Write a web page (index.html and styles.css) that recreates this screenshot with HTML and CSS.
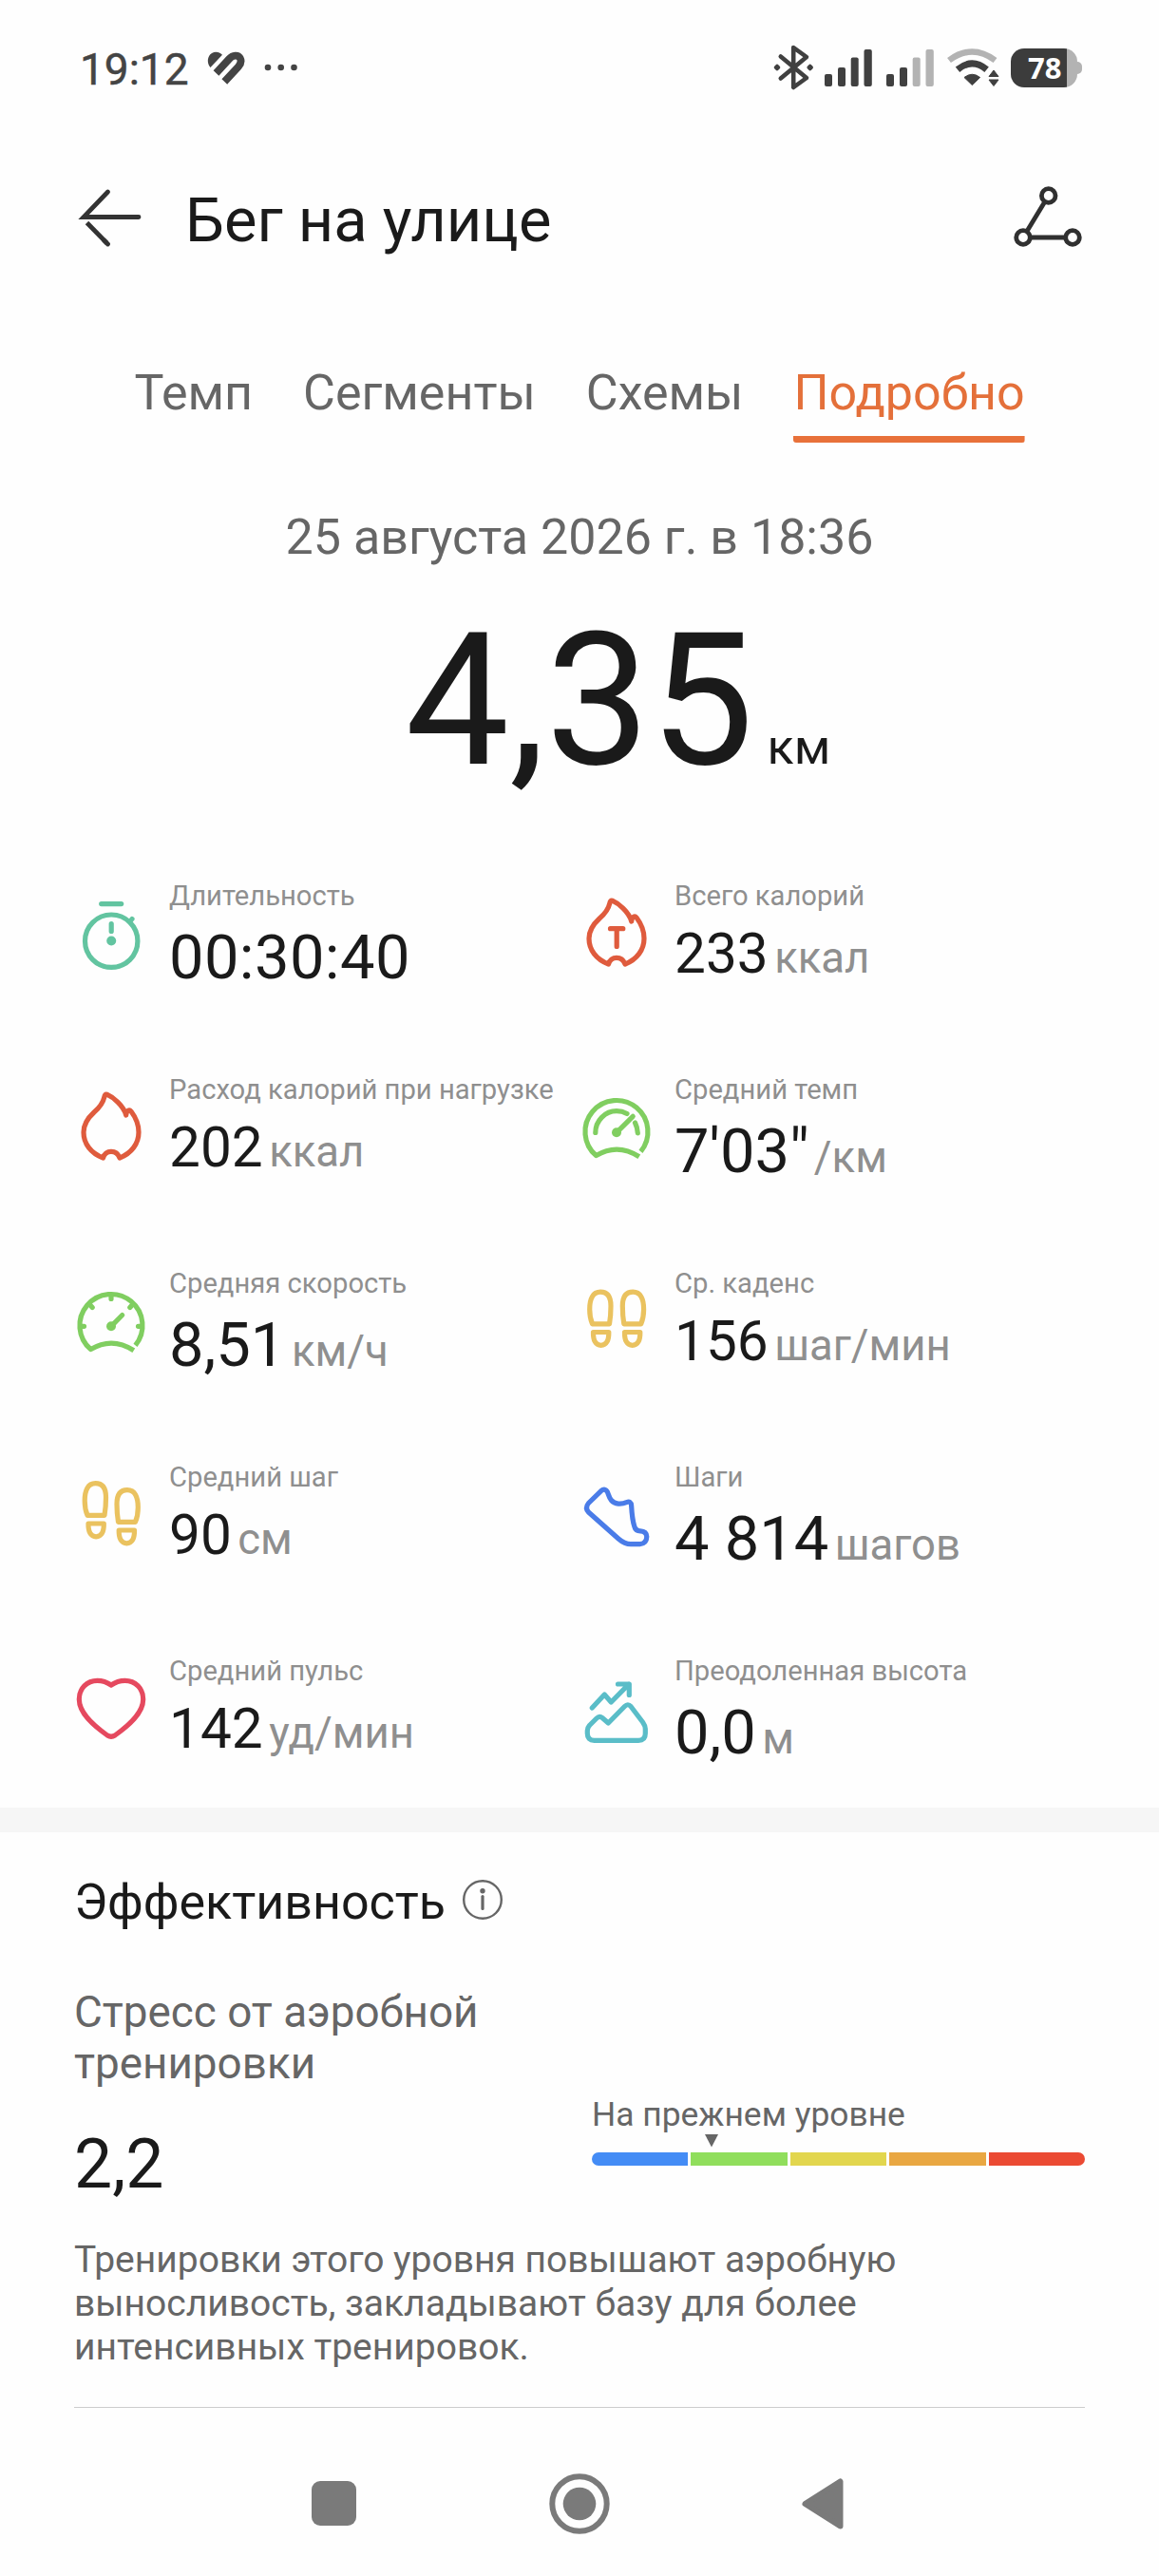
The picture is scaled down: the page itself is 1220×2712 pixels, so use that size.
FILE: index.html
```html
<!DOCTYPE html>
<html lang="ru">
<head>
<meta charset="utf-8">
<title>Бег на улице</title>
<link rel="stylesheet" href="styles.css">
</head>
<body>
<svg class="defs" aria-hidden="true">
  <symbol id="flame" viewBox="0 0 72 72" overflow="visible">
    <path d="M31.5 1.2C38 4 49 13 51.7 23C52 18.5 55 16.5 57 19C61.5 25 65 32 65 41C65 53 57.5 63 45 68C43.5 64 40 61.3 36 61.3C32 61.3 28.5 64 27.5 68C14.5 63 7 53 7 41C7 32 12 25.500 18 20C25 14 27.500 10 28.800 4Q29.500 .5 31.500 1.200Z"/>
  </symbol>
  <symbol id="foot" viewBox="0 0 34 66" overflow="visible">
    <path d="M10.500 38.800C8.500 34 7.700 29 7.700 23.500C7.700 12.500 11 5.200 19 5.200C27 5.200 30 11.500 30 20C30 27 29.500 33 28.500 38.800Z"/>
    <path d="M11.500 47.500H27.800C28 56 25.500 61.300 19.600 61.300C13.800 61.300 11.300 56 11.500 47.500Z"/>
  </symbol>
  <symbol id="gauge" viewBox="0 0 72 72" overflow="visible">
    <path stroke-linecap="butt" d="M61.500 58.400A33 33 0 1 0 14.500 62.600Q37 49 59.800 63.800"/>
    <circle cx="36" cy="38.300" r="5" fill="currentColor" stroke="none"/>
  </symbol>
</svg>

<header class="status">
  <span class="time">19:12</span>
  <svg class="health" width="40" height="34" viewBox="0 0 40 34" fill="none" stroke="#444">
    <path fill="#444" stroke="none" d="M3.500 17C-.5 12.500 0 5 5 2C8.500-.2 13 .5 16 3.700Z"/>
    <path stroke-width="7.800" d="M9.500 23L23.300 8C27 4 32.500 3.500 34.700 7.200C36.500 10.500 35.300 13.500 32.800 16.300L18.300 32"/>
  </svg>
  <svg class="more" width="36" height="8" fill="#444"><circle cx="4" cy="4" r="3.300"/><circle cx="17.700" cy="4" r="3.300"/><circle cx="31.500" cy="4" r="3.300"/></svg>
  <div class="indicators">
    <svg class="bt" width="43" height="48" viewBox="0 0 43 48" fill="none" stroke="#404040" stroke-width="4.600" stroke-linecap="round" stroke-linejoin="round">
      <path d="M7.800 12.500L35 35L21.200 45V3L35 13L7.800 35.500"/>
      <path d="M4 22.500L2.500 24L4 25.500L5.500 24ZM38.700 22.500L37.200 24L38.700 25.500L40.200 24Z" stroke-width="3.600"/>
    </svg>
    <svg class="bars" width="50" height="39" fill="#404040"><rect y="26" width="8" height="13" rx="2"/><rect x="14" y="19" width="8" height="20" rx="2"/><rect x="27.700" y="8.500" width="8" height="30.500" rx="2"/><rect x="41.500" width="8.300" height="39" rx="2"/></svg>
    <svg class="bars second" width="50" height="39" fill="#404040"><rect y="26" width="8" height="13" rx="2"/><rect x="14" y="19" width="8" height="20" rx="2"/><g fill="#b3b3b3"><rect x="27.700" y="8.500" width="8" height="30.500" rx="2"/><rect x="41.500" width="8.300" height="39" rx="2"/></g></svg>
    <svg class="wifi" width="55" height="40" viewBox="0 0 55 40" fill="none">
      <path d="M2 12.500Q26.300-5.500 50.500 12.500" stroke="#b3b3b3" stroke-width="6.500"/>
      <path d="M11 22.200Q26.300 9.500 41.600 22.200" stroke="#404040" stroke-width="7"/>
      <path d="M18 30.500Q26.300 24 34.600 30.500L26.300 38.500Z" fill="#404040" stroke="#404040" stroke-width="1" stroke-linejoin="round"/>
      <path d="M44 29.500L49 23L54 29.500ZM44 33L49 39.500L54 33Z" fill="#404040" stroke="#404040" stroke-linejoin="round"/>
    </svg>
    <div class="battery"><span class="level">78</span></div>
  </div>
</header>

<nav class="appbar">
  <svg width="66" height="60" viewBox="0 0 66 60" fill="none" stroke="#333" stroke-width="4.800" stroke-linecap="round"><path d="M29.500 3L4 29.500H62"/><path stroke-linecap="butt" d="M7.500 35.500L28.500 57"/><path d="M25.500 54L29.500 58"/></svg>
  <h1>Бег на улице</h1>
  <svg class="route" width="72" height="66" viewBox="0 0 72 66" fill="none" stroke="#303030" stroke-width="4.800"><circle cx="36.700" cy="10" r="7.300"/><circle cx="10" cy="54" r="7.300"/><circle cx="62" cy="54" r="7.300"/><path d="M32.900 16.300L13.800 47.700M17.300 54H54.700"/></svg>
</nav>

<div class="tabs">
  <a>Темп</a><a>Сегменты</a><a>Схемы</a><a class="active">Подробно</a>
</div>

<section class="summary">
  <p class="date">25 августа 2026 г. в 18:36</p>
  <p class="distance"><span class="km">4,35</span><span class="km-unit">км</span></p>
</section>

<section class="metrics">
  <div class="metric">
    <svg class="icon mint" viewBox="0 0 72 72"><circle cx="36.200" cy="40.700" r="27.700"/><path d="M25.700 1.600H46.700M36.200 22.500V30.500M56 20L58 17.500"/><circle cx="36.200" cy="40.500" r="5" fill="currentColor" stroke="none"/></svg>
    <div><p class="label">Длительность</p><p class="value big clock">00:30:40</p></div>
  </div>
  <div class="metric">
    <svg class="icon red" viewBox="0 0 72 72"><use href="#flame" width="72" height="72"/><path d="M29.500 30.700H42.800M36.200 30.700V49.500"/></svg>
    <div><p class="label">Всего калорий</p><p class="value">233<span class="unit">ккал</span></p></div>
  </div>
  <div class="metric">
    <svg class="icon red" viewBox="0 0 72 72"><use href="#flame" width="72" height="72"/></svg>
    <div><p class="label">Расход калорий при нагрузке</p><p class="value">202<span class="unit">ккал</span></p></div>
  </div>
  <div class="metric">
    <svg class="icon green" viewBox="0 0 72 72"><use href="#gauge" width="72" height="72"/><path d="M36 38.300L53.200 21.300"/><path d="M13.800 38.500C13.800 26 24 15.700 36 15.700Q42 15.700 47 18.500"/><path d="M55.500 28Q58 33 58.300 38.800"/></svg>
    <div><p class="label">Средний темп</p><p class="value big">7'03"<span class="unit tight">/км</span></p></div>
  </div>
  <div class="metric">
    <svg class="icon green" viewBox="0 0 72 72"><use href="#gauge" width="72" height="72"/><path d="M36 38.300L47.700 26.500M36 6V9.500M4.500 38.300H7.500M64.500 38.300H67.500M14 16L16.200 18.500M58 16L55.800 18.500"/></svg>
    <div><p class="label">Средняя скорость</p><p class="value big">8,51<span class="unit">км/ч</span></p></div>
  </div>
  <div class="metric">
    <svg class="icon yellow" viewBox="0 0 72 72"><use href="#foot" width="34" height="66"/><use href="#foot" width="34" height="66" transform="matrix(-1 0 0 1 72.300 0)"/></svg>
    <div><p class="label">Ср. каденс</p><p class="value">156<span class="unit">шаг/мин</span></p></div>
  </div>
  <div class="metric">
    <svg class="icon yellow" viewBox="0 0 72 72"><use href="#foot" y="-2.500" x=".5" width="34" height="66"/><use href="#foot" width="34" height="66" transform="matrix(-1 0 0 1 72 4.500)"/></svg>
    <div><p class="label">Средний шаг</p><p class="value">90<span class="unit">см</span></p></div>
  </div>
  <div class="metric">
    <svg class="icon blue" viewBox="0 0 72 72"><path d="M19.500 7.800L6.500 20.500Q2.500 25.500 6.500 30L38 58Q44.500 63.700 51 63.700H60.500Q67.600 63.200 67.800 55.800Q67.500 50 61 49.800Q56 49.800 54.800 45C52.500 38 52 30 51.600 23Q51.300 18 46.500 19.600C41 22 34 21.800 30.500 17.500C28 14.500 27.800 12 26.500 9Q24 4 19.500 7.800Z"/></svg>
    <div><p class="label">Шаги</p><p class="value big">4 814<span class="unit">шагов</span></p></div>
  </div>
  <div class="metric">
    <svg class="icon rose" viewBox="0 0 72 72"><path d="M36 11C31 7.500 27 6.300 21.500 6.300C10.500 6.300 2.300 14.500 2.300 26C2.300 41 18 54 32 64Q36 66.500 40 64C54 54 69.700 41 69.700 26C69.700 14.500 61.500 6.300 50.500 6.300C45 6.300 41 7.500 36 11Z"/></svg>
    <div><p class="label">Средний пульс</p><p class="value">142<span class="unit">уд/мин</span></p></div>
  </div>
  <div class="metric">
    <svg class="icon teal" viewBox="0 0 72 72"><path d="M10.300 32L23.300 18L30.300 26L49 7M37.500 7H49.300V18.500"/><path d="M7.500 50.500L15 43Q18 40 21 42.500L27.300 48L44.500 30.500Q48 27 51 30.500L63.500 47Q66.300 51 66.300 54V59Q66.300 66.300 59 66.300H12.500Q5.300 66.300 5.300 59V56Q5.300 53 7.500 50.500Z"/></svg>
    <div><p class="label">Преодоленная высота</p><p class="value big">0,0<span class="unit">м</span></p></div>
  </div>
</section>

<section class="effect">
  <h2><span>Эффективность</span>
    <svg width="44" height="44" viewBox="0 0 44 44" fill="none" stroke="#666"><circle cx="22" cy="22" r="19.800" stroke-width="2.400"/><path d="M22 18.500V31.500" stroke-width="3.200" stroke-linecap="round"/><circle cx="22" cy="12.800" r="2.700" fill="#666" stroke="none"/></svg>
  </h2>
  <div class="aerobic">
    <div class="score">
      <h3>Стресс от аэробной тренировки</h3>
      <p class="points">2,2</p>
    </div>
    <div class="scale">
      <p>На прежнем уровне</p>
      <div class="track"><i class="b"></i><i class="g"></i><i class="y"></i><i class="o"></i><i class="r"></i>
        <svg class="marker" style="left:118.500px" width="14" height="14"><path fill="#666" d="M0 0H14L7 13.500Z"/></svg>
      </div>
    </div>
  </div>
  <p class="note">Тренировки этого уровня повышают аэробную выносливость, закладывают базу для более интенсивных тренировок.</p>
</section>

<footer class="sysnav">
  <svg width="47" height="47"><rect width="47" height="47" rx="9"/></svg>
  <svg width="64" height="64"><circle cx="32" cy="32" r="28.700" fill="none" stroke="#7a7a7a" stroke-width="6"/><circle cx="32" cy="32" r="17.300"/></svg>
  <svg width="44" height="54"><path d="M3.500 27L40.500 3.500V50.500Z" stroke="#7a7a7a" stroke-width="6" stroke-linejoin="round"/></svg>
</footer>
</body>
</html>
```
FILE: styles.css
```css
* { box-sizing: border-box; margin: 0; padding: 0; }
body {
  width: 1220px;
  height: 2712px;
  overflow: hidden;
  background: #fefefe;
  color: #1a1a1a;
  font-family: Roboto, "Noto Sans", sans-serif;
  font-weight: 400;
}
h1, h2, h3 { font-weight: 400; }
svg { display: block; flex: none; overflow: visible; }
.defs { width: 0; height: 0; position: absolute; }

.status {
  display: flex;
  align-items: center;
  height: 142px;
  padding: 0 81px 0 84px;
  color: #444;
}
.time { width: 134px; font-size: 46px; line-height: 54px; padding-top: 4px; -webkit-text-stroke: .5px #444; }
.more { margin-left: 20px; }
.indicators { display: flex; align-items: center; margin-left: auto; }
.bars { margin-left: 11px; }
.second { margin-left: 15px; }
.wifi { margin: 0 12px 0 14px; }
.battery {
  position: relative;
  width: 70px;
  height: 41px;
  margin-right: 5px;
  border-radius: 14px;
  background: linear-gradient(90deg, #3c3c3c 59px, #b3b3b3 59px);
}
.battery::after {
  content: "";
  position: absolute;
  left: 69px;
  top: 14px;
  width: 6px;
  height: 13px;
  border-radius: 0 5px 5px 0;
  background: #b3b3b3;
}
.level {
  display: block;
  padding-left: 18px;
  font: 700 31px/40px "Open Sans", sans-serif;
  color: #fff;
}

.appbar { display: flex; align-items: center; height: 174px; padding: 0 81px 0 84px; }
.appbar h1 { margin-left: 45px; font-size: 65px; line-height: 76px; padding-top: 5px; }
.route { margin-left: auto; }

.tabs {
  display: flex;
  justify-content: center;
  gap: 53px;
  height: 150px;
  padding-top: 67px;
  color: #666;
  font-size: 52px;
  line-height: 61px;
}
.tabs a { height: 83px; }
.tabs .active { color: #e4703a; background: linear-gradient(#e8713a, #e8713a) bottom / 100% 7px no-repeat; border-radius: 3px; }

.summary { height: 460px; padding-top: 69px; text-align: center; }
.date { color: #666; font-size: 52px; line-height: 61px; }
.distance { display: grid; grid-template-columns: 1fr auto 1fr; align-items: baseline; margin-top: 28px; }
.km { grid-column: 2; font-size: 195px; line-height: 228px; }
.km-unit { padding-left: 14px; text-align: left; font-size: 52px; }

.metrics {
  display: grid;
  grid-template-columns: 532px 1fr;
  grid-auto-rows: 204px;
  height: 977px;
  padding-left: 81px;
}
.metric { display: flex; align-items: center; align-self: start; gap: 25px; }
.icon { width: 72px; height: 72px; fill: none; stroke: currentColor; stroke-width: 5.2; stroke-linecap: round; stroke-linejoin: round; }
.mint { color: #62c4a0; }
.red { color: #df5b3d; }
.green { color: #80ce60; }
.yellow { color: #eac25f; }
.blue { color: #4a7ce8; }
.rose { color: #e5495f; }
.teal { color: #5abdc8; }
.label { margin-bottom: 10px; color: #8f8f8f; font-size: 29.2px; line-height: 34px; white-space: nowrap; }
.value { padding-bottom: 2px; font-size: 58.5px; line-height: 68px; white-space: nowrap; }
.value.big { padding-bottom: 0; font-size: 65px; line-height: 76px; }
.value.clock { letter-spacing: .4px; }
.unit { margin-left: 6.5px; color: #8f8f8f; font-size: 45.5px; line-height: 1; }
.unit.tight { margin-left: 5px; }

.effect { margin: 0 78px; height: 632px; border-bottom: 1px solid #ccc; }
.effect::before { content: ""; display: block; height: 26px; margin: 0 -78px; background: #f6f6f6; }
.effect h2 { display: flex; align-items: center; gap: 17px; height: 142px; font-size: 52px; }
.effect h2 span { padding-top: 4px; }
.aerobic { display: grid; grid-template-columns: 1fr 519px; height: 277px; padding-top: 20px; }
.score h3 { width: 440px; padding-top: 1px; color: #666; font-size: 45.8px; line-height: 54px; }
.points { margin-top: 37px; font-size: 71.5px; line-height: 84px; }
.scale { padding-top: 114px; color: #666; font-size: 35.4px; line-height: 42px; }
.track { position: relative; display: flex; gap: 3px; height: 14px; margin-top: 19px; }
.track i { flex: 1; }
.track .b { background: #448cf5; border-radius: 7px 0 0 7px; }
.track .g { background: #90de5c; }
.track .y { background: #e2d64e; }
.track .o { background: #e9a742; }
.track .r { background: #eb4a33; border-radius: 0 7px 7px 0; }
.marker { position: absolute; top: -19px; }
.note { width: 900px; padding-top: 8px; color: #666; font-size: 39px; line-height: 46px; }

.sysnav { display: flex; align-items: center; height: 177px; padding: 24px 332px 0 328px; justify-content: space-between; fill: #7a7a7a; }
```
